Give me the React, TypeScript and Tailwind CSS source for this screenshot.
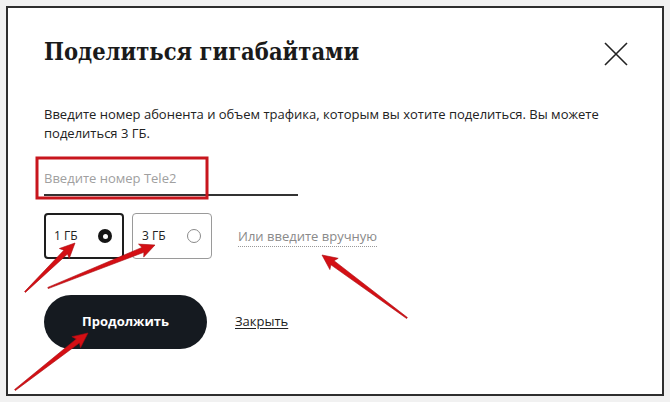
import React from "react";

type Pt = [number, number];

function arrowPoints(tail: Pt, tip: Pt) {
  const [x1, y1] = tail;
  const [x2, y2] = tip;
  const len = Math.hypot(x2 - x1, y2 - y1);
  const ux = (x2 - x1) / len;
  const uy = (y2 - y1) / len;
  const nx = -uy;
  const ny = ux;
  const head = 15;
  const hw = 7;
  const bx = x2 - ux * head;
  const by = y2 - uy * head;
  const p = (x: number, y: number) => `${x.toFixed(1)},${y.toFixed(1)}`;
  return [
    p(x1 + nx * 0.6, y1 + ny * 0.6),
    p(bx + ux * 2 + nx * 2.6, by + uy * 2 + ny * 2.6),
    p(bx + nx * hw, by + ny * hw),
    p(x2, y2),
    p(bx - nx * hw, by - ny * hw),
    p(bx + ux * 2 - nx * 2.6, by + uy * 2 - ny * 2.6),
    p(x1 - nx * 0.6, y1 - ny * 0.6),
  ].join(" ");
}

const arrows: [Pt, Pt][] = [
  [[25, 292], [75, 243]],
  [[48, 288], [155, 245]],
  [[407, 318], [322, 255]],
  [[15, 390], [88, 333]],
];

const sans = { fontFamily: '"Open Sans", "Noto Sans", sans-serif' };

export default function App() {
  return (
    <div className="relative h-[402px] w-[670px] overflow-hidden bg-[#f1f1f1]" style={sans}>
      <div className="ml-[6px] mt-[6px] h-[390px] w-[658px] border-2 border-[#2e2e2e] bg-white pl-[36px] pr-[34px]">
        <div className="flex items-start justify-between pt-[28px]">
          <h1 className="text-[23.5px] font-bold leading-[32px] text-[#1a1a1a]" style={{ fontFamily: '"DejaVu Serif Condensed", "DejaVu Serif", serif', fontStretch: "condensed" }}>
            Поделиться гигабайтами
          </h1>
          <svg width="24" height="24" viewBox="0 0 24 24" className="mt-[6px]">
            <path d="M1 1 L23 23 M23 1 L1 23" stroke="#222" strokeWidth="1.6" fill="none" />
          </svg>
        </div>
        <p className="mt-[37px] text-[13px] leading-[19px] text-[#222]">
          Введите номер абонента и объем трафика, которым вы хотите поделиться. Вы можете поделиться 3 ГБ.
        </p>
        <div className="mt-[25px] w-[254px] border-b-2 border-[#333] pb-[6px] text-[13px] leading-[20px] text-[#a0a0a0]">
          Введите номер Tele2
        </div>
        <div className="mt-[17px] flex items-center gap-[8px]">
          <div className="flex h-[46px] w-[80px] items-center justify-between rounded-[4px] border-2 border-[#1e1e1e] pl-[8px] pr-[10px] text-[12px] text-[#222]">
            <span>1 ГБ</span>
            <span className="flex h-[14px] w-[14px] items-center justify-center rounded-full bg-[#151515]">
              <span className="h-[5px] w-[5px] rounded-full bg-white" />
            </span>
          </div>
          <div className="flex h-[46px] w-[80px] items-center justify-between rounded-[4px] border border-[#9a9a9a] pl-[9px] pr-[10px] text-[12px] text-[#222]">
            <span>3 ГБ</span>
            <span className="h-[14px] w-[14px] rounded-full border border-[#8a8a8a]" />
          </div>
          <span className="ml-[18px] border-b border-dotted border-[#999] text-[13px] leading-[20px] text-[#8a8a8a]">Или введите вручную</span>
        </div>
        <div className="mt-[36px] flex items-center gap-[28px]">
          <button className="h-[54px] w-[163px] rounded-full bg-[#151a20] text-[13px] font-bold text-white">Продолжить</button>
          <span className="text-[13px] text-[#222] underline underline-offset-2">Закрыть</span>
        </div>
      </div>
      <svg className="absolute left-0 top-0" width="670" height="402">
        <rect x="37" y="158" width="170" height="40" fill="none" stroke="#c8161d" strokeWidth="3" />
        {arrows.map(([a, b], i) => (
          <polygon key={i} points={arrowPoints(a, b)} fill="#d40f14" stroke="#a80c10" strokeWidth="0.6" />
        ))}
      </svg>
    </div>
  );
}
